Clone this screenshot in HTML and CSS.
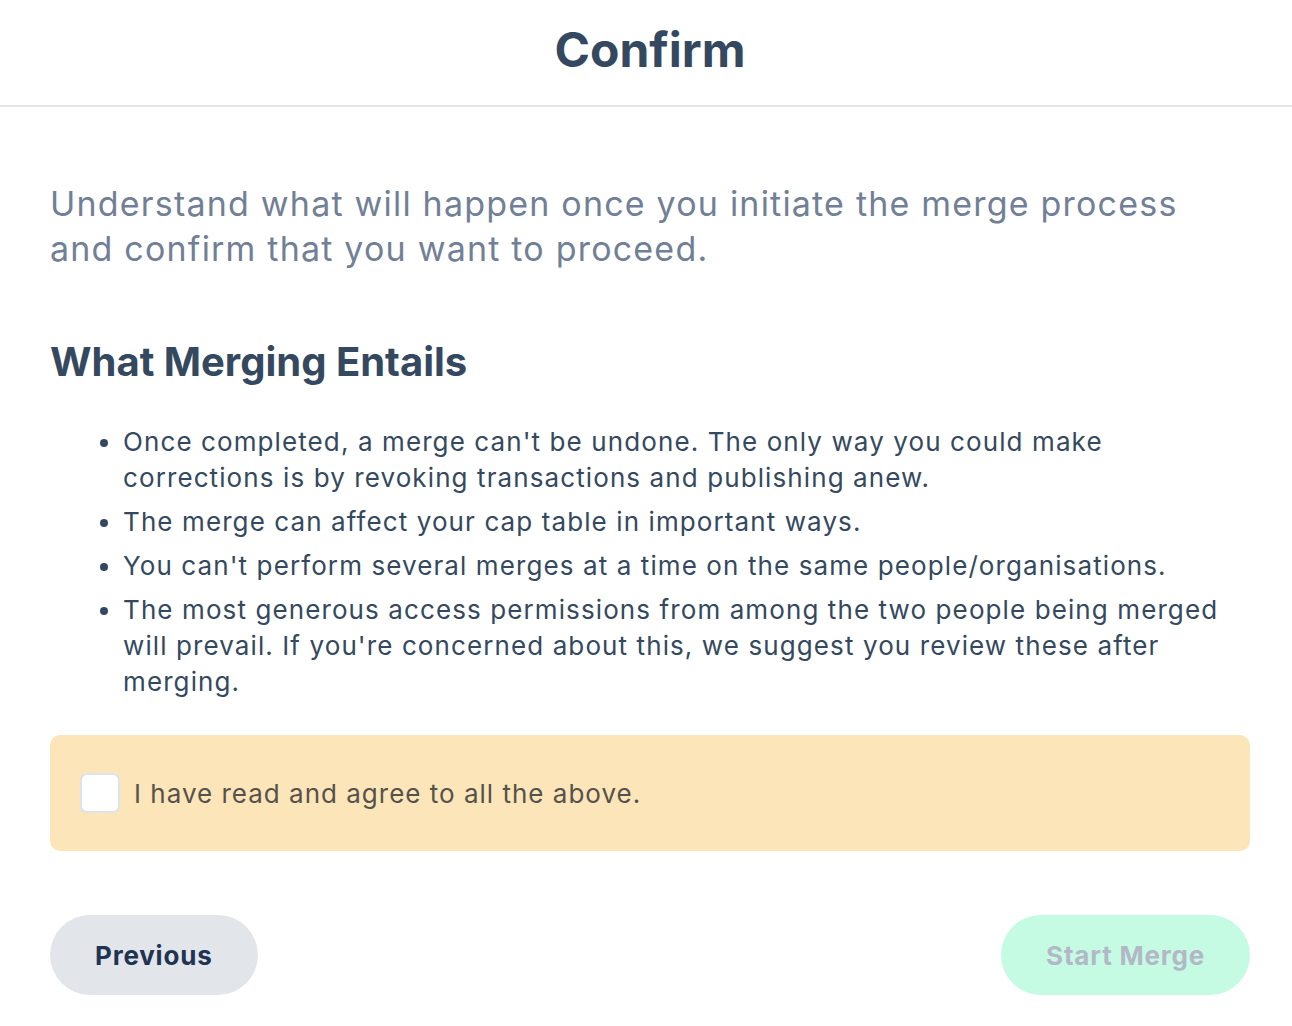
FILE: index.html
```html
<!DOCTYPE html>
<html lang="en">
<head>
<meta charset="utf-8">
<title>Confirm</title>
<link rel="stylesheet" href="styles.css">
</head>
<body>
<header class="header">
  <h1 class="title">Confirm</h1>
</header>
<main class="content">
  <p class="intro">Understand what will happen once you initiate the merge process and confirm that you want to proceed.</p>
  <h2 class="subtitle">What Merging Entails</h2>
  <ul class="list">
    <li>Once completed, a merge can't be undone. The only way you could make corrections is by revoking transactions and publishing anew.</li>
    <li>The merge can affect your cap table in important ways.</li>
    <li>You can't perform several merges at a time on the same people/organisations.</li>
    <li>The most generous access permissions from among the two people being merged will prevail. If you're concerned about this, we suggest you review these after merging.</li>
  </ul>
  <label class="agree">
    <span class="box"></span>
    <span class="agree-text">I have read and agree to all the above.</span>
  </label>
  <div class="actions">
    <button class="btn btn-prev">Previous</button>
    <button class="btn btn-start">Start Merge</button>
  </div>
</main>
</body>
</html>
```

FILE: styles.css
```css
* { box-sizing: border-box; }
html, body { margin: 0; padding: 0; background: #fff; }
body { font-family: Inter, "Noto Sans", sans-serif; color: #344960; }

.header {
  height: 107px;
  border-bottom: 2px solid #e2e5e9;
  display: flex;
  align-items: center;
  justify-content: center;
  padding: 0 42px 6px 50px;
}
.title {
  margin: 0;
  font-size: 48px;
  font-weight: 700;
  color: #344960;
  line-height: 1;
}

.content {
  padding: 0 42px 0 50px;
}
.intro {
  margin: 74px 0 0;
  max-width: 1185px;
  font-size: 34px;
  line-height: 45px;
  letter-spacing: 1.2px;
  color: #718096;
}
.subtitle {
  margin: 67px 0 0;
  font-size: 40px;
  font-weight: 700;
  line-height: 48px;
  color: #344960;
}
.list {
  margin: 38px 0 0;
  padding-left: 73px;
  font-size: 26px;
  line-height: 36px;
  letter-spacing: 1.1px;
  color: #344960;
}
.list li { margin-bottom: 8px; }
.list li:last-child { margin-bottom: 0; }

.agree {
  margin-top: 35px;
  height: 116px;
  background: #fce5b8;
  border-radius: 10px;
  display: flex;
  align-items: center;
  padding-left: 30px;
  gap: 14px;
}
.box {
  width: 40px;
  height: 40px;
  background: #fff;
  border: 2px solid #dde3ea;
  border-radius: 7px;
  flex: none;
}
.agree-text {
  font-size: 26px;
  letter-spacing: 1px;
  color: #55524c;
}

.actions {
  margin-top: 64px;
  display: flex;
  justify-content: space-between;
}
.btn {
  height: 80px;
  border: none;
  border-radius: 40px;
  font-family: Inter, "Noto Sans", sans-serif;
  font-size: 26px;
  font-weight: 700;
  letter-spacing: 0.8px;
  padding: 0 45px;
}
.btn-prev { background: #e2e6eb; color: #1f3450; }
.btn-start { background: #c6fbe3; color: #b3b8c6; }
```
